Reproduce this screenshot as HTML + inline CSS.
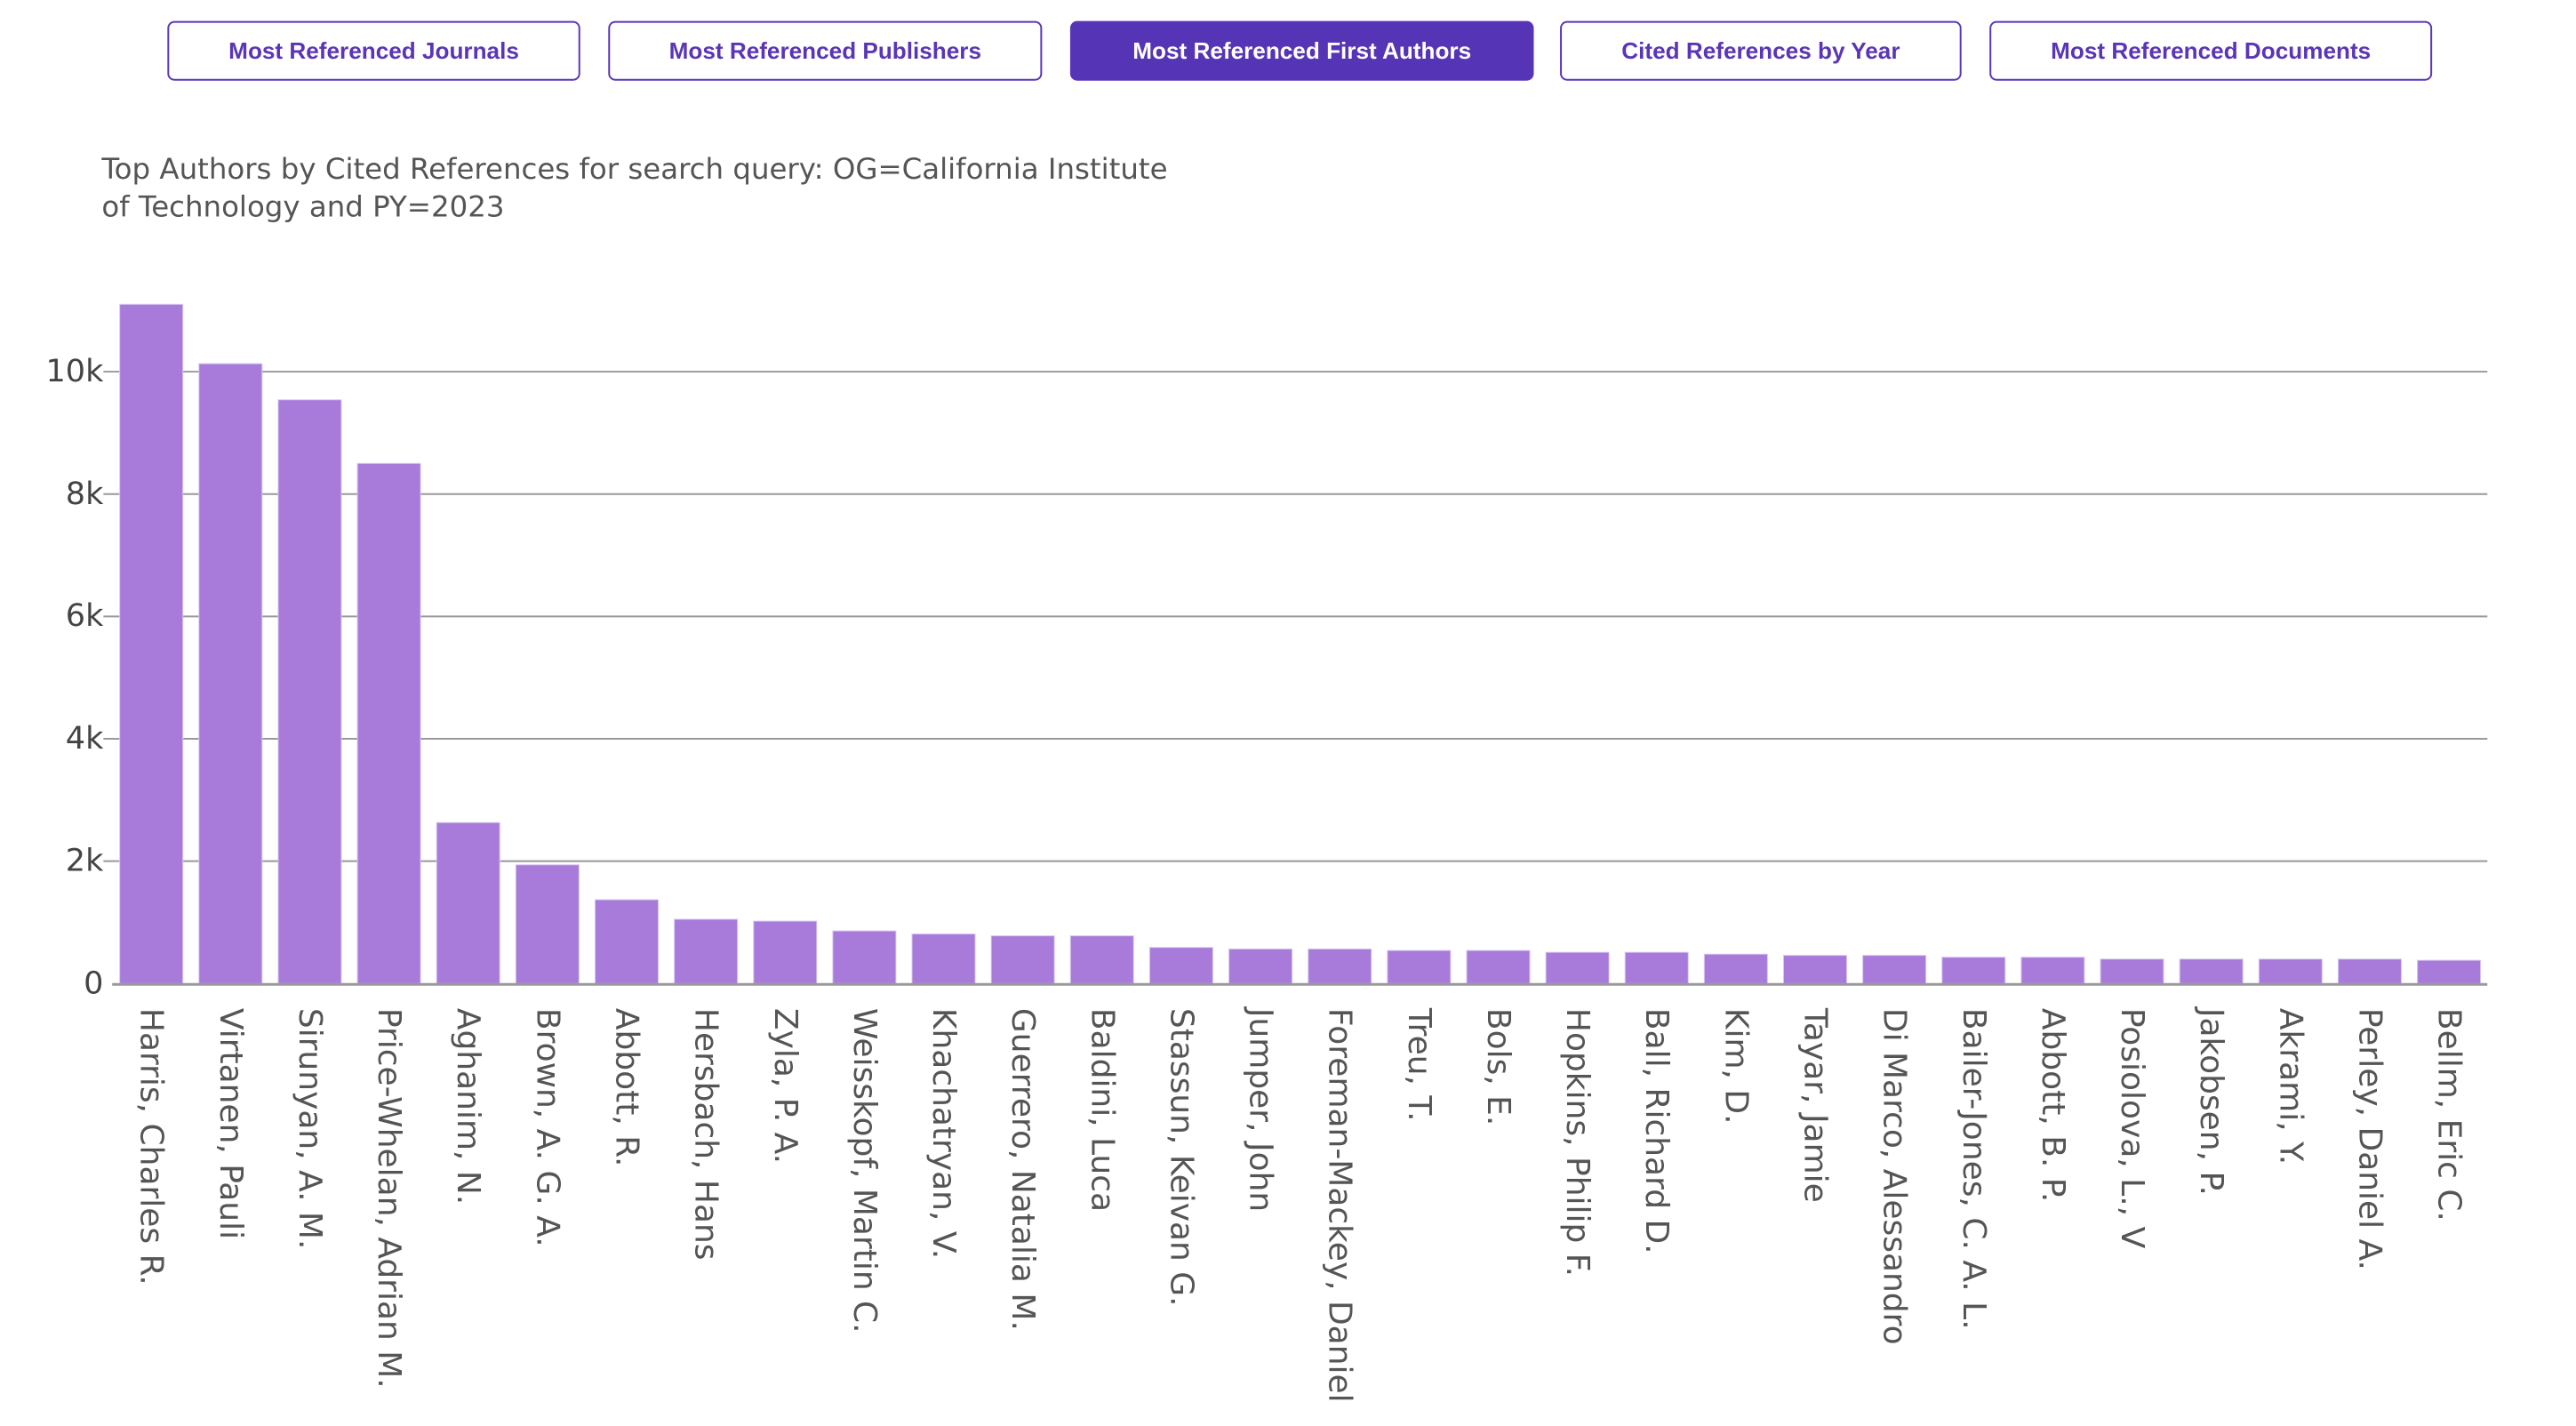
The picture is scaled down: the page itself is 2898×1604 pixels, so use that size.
<!DOCTYPE html>
<html><head><meta charset="utf-8"><style>
html,body{margin:0;padding:0;background:#fff;width:2898px;height:1604px;overflow:hidden}
#w{position:absolute;left:0;top:0;width:2940px;height:1627px;transform:scale(0.986);transform-origin:0 0}
.b{position:absolute;top:24px;height:64px;border:2px solid #5a35b8;border-radius:8px;background:#fff;color:#5a35b8;font:bold 26.5px "Liberation Sans",sans-serif;display:flex;align-items:center;justify-content:center;box-sizing:content-box}
.on{background:#5535b5;color:#fff}
</style></head><body><div id="w">
<div class="b" style="left:191px;width:467px">Most Referenced Journals</div>
<div class="b" style="left:694px;width:491px">Most Referenced Publishers</div>
<div class="b on" style="left:1221px;width:525px">Most Referenced First Authors</div>
<div class="b" style="left:1780px;width:454px">Cited References by Year</div>
<div class="b" style="left:2270px;width:501px">Most Referenced Documents</div>
<svg width="2940" height="1627" style="position:absolute;left:0;top:0" font-family="DejaVu Sans, sans-serif">
<g fill="#555" font-size="32.9"><text x="116" y="204">Top Authors by Cited References for search query: OG=California Institute</text><text x="116" y="247">of Technology and PY=2023</text></g>
<g stroke="#999" stroke-width="2">
<line x1="118" x2="2838" y1="982.4" y2="982.4"/><line x1="118" x2="2838" y1="842.8" y2="842.8"/><line x1="118" x2="2838" y1="703.2" y2="703.2"/><line x1="118" x2="2838" y1="563.6" y2="563.6"/><line x1="118" x2="2838" y1="424" y2="424"/>
</g>
<g fill="#444" font-size="35.5" text-anchor="end" dominant-baseline="central">
<text x="118" y="1122">0</text><text x="118" y="982">2k</text><text x="118" y="843">4k</text><text x="118" y="703">6k</text><text x="118" y="564">8k</text><text x="118" y="424">10k</text></g>
<g fill="#a87bdb" stroke="#d6c6f0" stroke-width="1">
<rect x="136.6" y="347.2" width="72" height="774.8"/><rect x="227" y="414.9" width="72" height="707.1"/><rect x="317.4" y="456.1" width="72" height="665.9"/><rect x="407.8" y="528.7" width="72" height="593.3"/><rect x="498.2" y="938.4" width="72" height="183.6"/><rect x="588.6" y="986.6" width="72" height="135.4"/><rect x="679" y="1026.4" width="72" height="95.6"/><rect x="769.4" y="1048.7" width="72" height="73.3"/><rect x="859.8" y="1050.8" width="72" height="71.2"/><rect x="950.2" y="1062" width="72" height="60"/><rect x="1040.6" y="1065.5" width="72" height="56.5"/><rect x="1131" y="1067.6" width="72" height="54.4"/><rect x="1221.4" y="1067.6" width="72" height="54.4"/><rect x="1311.8" y="1080.8" width="72" height="41.2"/><rect x="1402.2" y="1082.6" width="72" height="39.4"/><rect x="1492.6" y="1082.6" width="72" height="39.4"/><rect x="1583" y="1084.3" width="72" height="37.7"/><rect x="1673.4" y="1084.3" width="72" height="37.7"/><rect x="1763.8" y="1086.4" width="72" height="35.6"/><rect x="1854.2" y="1086.4" width="72" height="35.6"/><rect x="1944.6" y="1088.5" width="72" height="33.5"/><rect x="2035" y="1089.9" width="72" height="32.1"/><rect x="2125.4" y="1089.9" width="72" height="32.1"/><rect x="2215.8" y="1092" width="72" height="30"/><rect x="2306.2" y="1092" width="72" height="30"/><rect x="2396.6" y="1094.1" width="72" height="27.9"/><rect x="2487" y="1094.1" width="72" height="27.9"/><rect x="2577.4" y="1094.1" width="72" height="27.9"/><rect x="2667.8" y="1094.1" width="72" height="27.9"/><rect x="2758.2" y="1095.5" width="72" height="26.5"/>
</g>
<line x1="128" x2="2838" y1="1123" y2="1123" stroke="#999" stroke-width="3"/>
<g fill="#555" font-size="36.5" dominant-baseline="central">
<text transform="translate(172.6,1150) rotate(90)">Harris, Charles R.</text>
<text transform="translate(263,1150) rotate(90)">Virtanen, Pauli</text>
<text transform="translate(353.4,1150) rotate(90)">Sirunyan, A. M.</text>
<text transform="translate(443.8,1150) rotate(90)">Price-Whelan, Adrian M.</text>
<text transform="translate(534.2,1150) rotate(90)">Aghanim, N.</text>
<text transform="translate(624.6,1150) rotate(90)">Brown, A. G. A.</text>
<text transform="translate(715,1150) rotate(90)">Abbott, R.</text>
<text transform="translate(805.4,1150) rotate(90)">Hersbach, Hans</text>
<text transform="translate(895.8,1150) rotate(90)">Zyla, P. A.</text>
<text transform="translate(986.2,1150) rotate(90)">Weisskopf, Martin C.</text>
<text transform="translate(1076.6,1150) rotate(90)">Khachatryan, V.</text>
<text transform="translate(1167,1150) rotate(90)">Guerrero, Natalia M.</text>
<text transform="translate(1257.4,1150) rotate(90)">Baldini, Luca</text>
<text transform="translate(1347.8,1150) rotate(90)">Stassun, Keivan G.</text>
<text transform="translate(1438.2,1150) rotate(90)">Jumper, John</text>
<text transform="translate(1528.6,1150) rotate(90)">Foreman-Mackey, Daniel</text>
<text transform="translate(1619,1150) rotate(90)">Treu, T.</text>
<text transform="translate(1709.4,1150) rotate(90)">Bols, E.</text>
<text transform="translate(1799.8,1150) rotate(90)">Hopkins, Philip F.</text>
<text transform="translate(1890.2,1150) rotate(90)">Ball, Richard D.</text>
<text transform="translate(1980.6,1150) rotate(90)">Kim, D.</text>
<text transform="translate(2071,1150) rotate(90)">Tayar, Jamie</text>
<text transform="translate(2161.4,1150) rotate(90)">Di Marco, Alessandro</text>
<text transform="translate(2251.8,1150) rotate(90)">Bailer-Jones, C. A. L.</text>
<text transform="translate(2342.2,1150) rotate(90)">Abbott, B. P.</text>
<text transform="translate(2432.6,1150) rotate(90)">Posiolova, L., V</text>
<text transform="translate(2523,1150) rotate(90)">Jakobsen, P.</text>
<text transform="translate(2613.4,1150) rotate(90)">Akrami, Y.</text>
<text transform="translate(2703.8,1150) rotate(90)">Perley, Daniel A.</text>
<text transform="translate(2794.2,1150) rotate(90)">Bellm, Eric C.</text>
</g>
</svg>
</div></body></html>
